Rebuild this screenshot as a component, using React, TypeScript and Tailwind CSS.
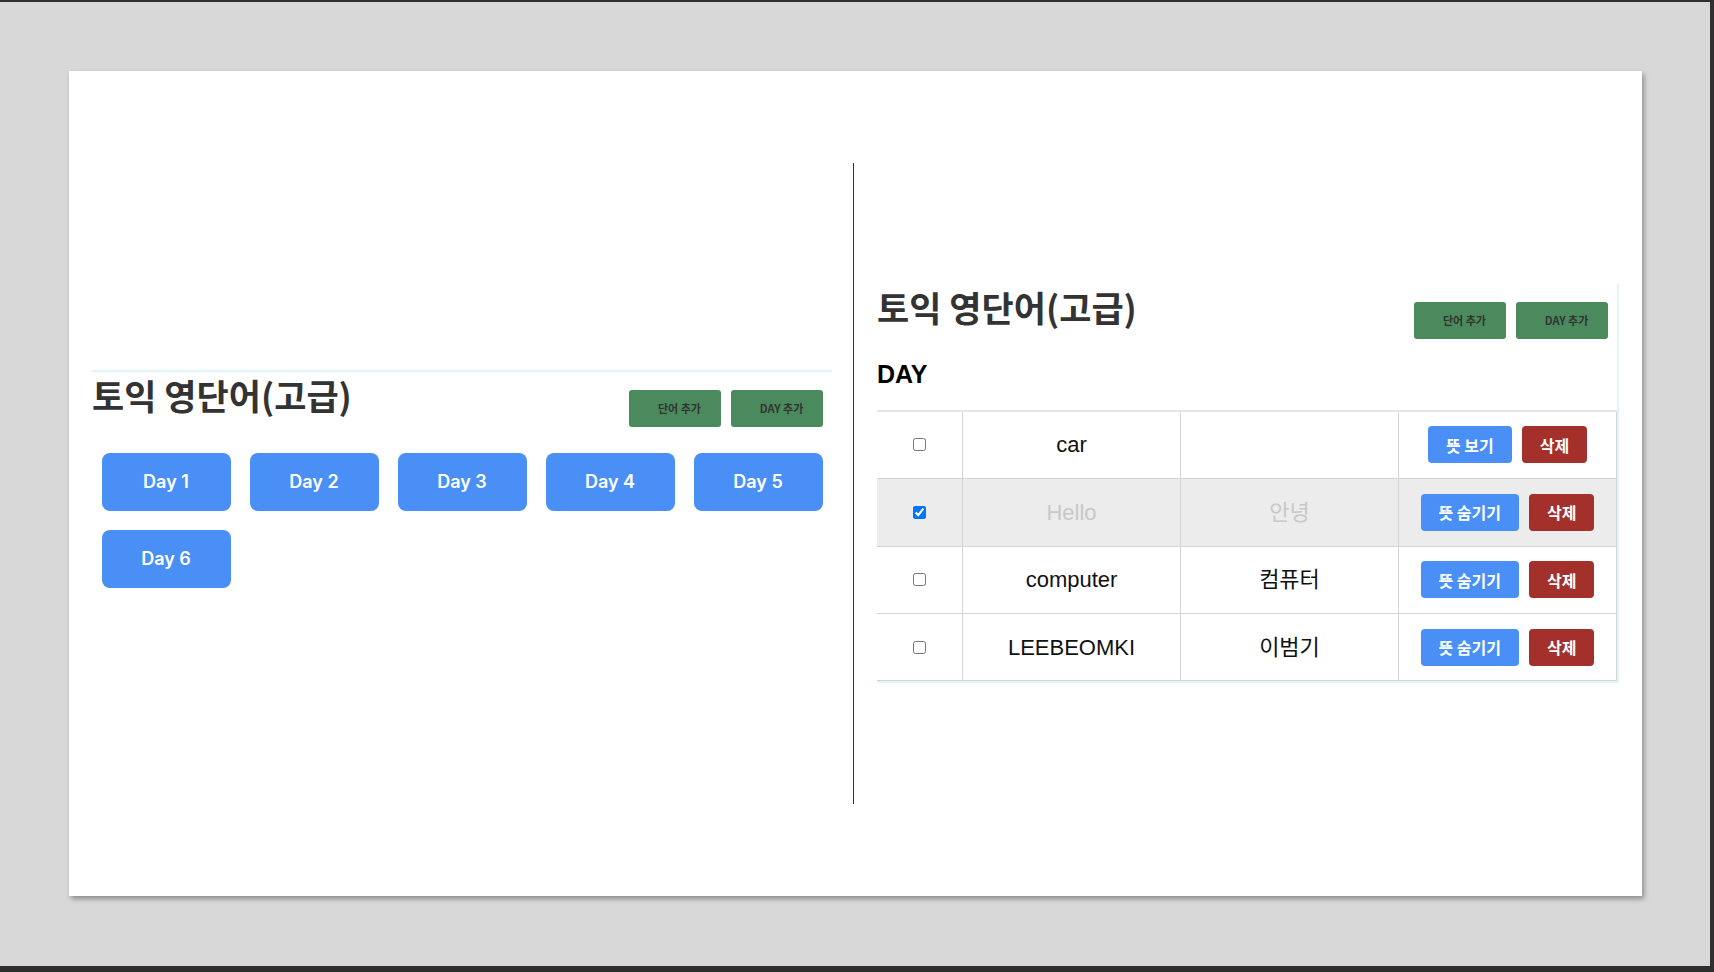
import { useState } from 'react';

const days = ['Day 1', 'Day 2', 'Day 3', 'Day 4', 'Day 5', 'Day 6'];

const initialWords = [
  { id: 1, eng: 'car', kor: '자동차', isShow: false, isDone: false },
  { id: 2, eng: 'Hello', kor: '안녕', isShow: true, isDone: true },
  { id: 3, eng: 'computer', kor: '컴퓨터', isShow: true, isDone: false },
  { id: 4, eng: 'LEEBEOMKI', kor: '이범기', isShow: true, isDone: false },
];

const kr = { fontFamily: '"Noto Sans CJK KR", "Liberation Sans", sans-serif' };
const mixed = { fontFamily: '"Liberation Sans", "Noto Sans CJK KR", sans-serif' };

export default function App() {
  return (
    <div className="box-border h-[972px] w-[1714px] overflow-hidden border-t-2 border-r-4 border-b-[6px] border-[#2e2e2e] bg-[#d8d8d8]">
      <div className="ml-[69px] mt-[69px] flex h-[825px] w-[1573px] items-center bg-white pl-[23px] shadow-[2px_3px_5px_rgba(0,0,0,0.35)]">
        <DayListPage />
        <div className="ml-[21px] mr-[23px] h-[641px] w-px bg-[#333]" />
        <WordPage />
      </div>
    </div>
  );
}

function Header() {
  return (
    <div className="flex items-start justify-between">
      <h1 className="m-0 mt-[3px] text-[35px] font-bold leading-[40px] text-[#333]" style={kr}>
        토익 영단어(고급)
      </h1>
      <div className="mt-[18px] mr-[9px] flex gap-[10px]">
        <GreenButton label="단어 추가" />
        <GreenButton label="DAY 추가" />
      </div>
    </div>
  );
}

function GreenButton({ label }: any) {
  return (
    <button
      className="flex h-[37px] w-[92px] items-center justify-center rounded-[3px] bg-[#4b8a5c] pl-[9px] text-[11px] font-bold text-[#333]"
      style={kr}
    >
      {label}
    </button>
  );
}

function DayListPage() {
  return (
    <div className="w-[740px] border-t-2 border-[#e0f5f8]">
      <Header />
      <div className="mt-[16px] flex flex-wrap">
        {days.map((d) => (
          <button
            key={d}
            className="mx-[9.5px] my-[9.5px] h-[58px] w-[129px] rounded-lg bg-[#4a8ff5] text-[18px] font-semibold text-white"
            style={{ fontFamily: 'Inter, "Liberation Sans", sans-serif' }}
          >
            {d}
          </button>
        ))}
      </div>
    </div>
  );
}

function WordPage() {
  const [words, setWords] = useState(initialWords);

  return (
    <div className="flex w-[742px] flex-col border-r-2 border-b-2 border-[#e0f5f8]">
      <Header />
      <h2 className="mt-[23px] text-[25px] font-bold leading-none text-black" style={mixed}>
        DAY
      </h2>
      <div className="mt-[23px] border-t-2 border-[#e6e6e6]">
        {words.map((w) => (
          <div
            key={w.id}
            className={
              w.isDone
                ? 'grid h-[67.4px] grid-cols-[86px_218px_218px_218px] border-b border-[#d4d4d4] bg-[#ececec] text-[#c8c8c8]'
                : 'grid h-[67.4px] grid-cols-[86px_218px_218px_218px] border-b border-[#d4d4d4] text-[#111]'
            }
            style={mixed}
          >
            <div className="flex items-center justify-center border-r border-[#d4d4d4]">
              <input
                type="checkbox"
                checked={w.isDone}
                onChange={() =>
                  setWords(words.map((x) => (x.id === w.id ? { ...x, isDone: !x.isDone } : x)))
                }
                className="h-[13px] w-[13px]"
              />
            </div>
            <div className="flex items-center justify-center border-r border-[#d4d4d4] text-[22px]">{w.eng}</div>
            <div className="flex items-center justify-center border-r border-[#d4d4d4] text-[22px]">
              {w.isShow && w.kor}
            </div>
            <div className="flex items-center justify-center gap-[10px] border-r border-[#d4d4d4]">
              <button
                onClick={() =>
                  setWords(words.map((x) => (x.id === w.id ? { ...x, isShow: !x.isShow } : x)))
                }
                className="h-[37px] rounded-[4px] bg-[#4a8ff5] px-[18px] text-[16px] font-semibold text-white"
                style={kr}
              >
                {w.isShow ? '뜻 숨기기' : '뜻 보기'}
              </button>
              <button className="h-[37px] rounded-[4px] bg-[#a3302b] px-[18px] text-[16px] font-semibold text-white" style={kr}>
                삭제
              </button>
            </div>
          </div>
        ))}
      </div>
    </div>
  );
}
